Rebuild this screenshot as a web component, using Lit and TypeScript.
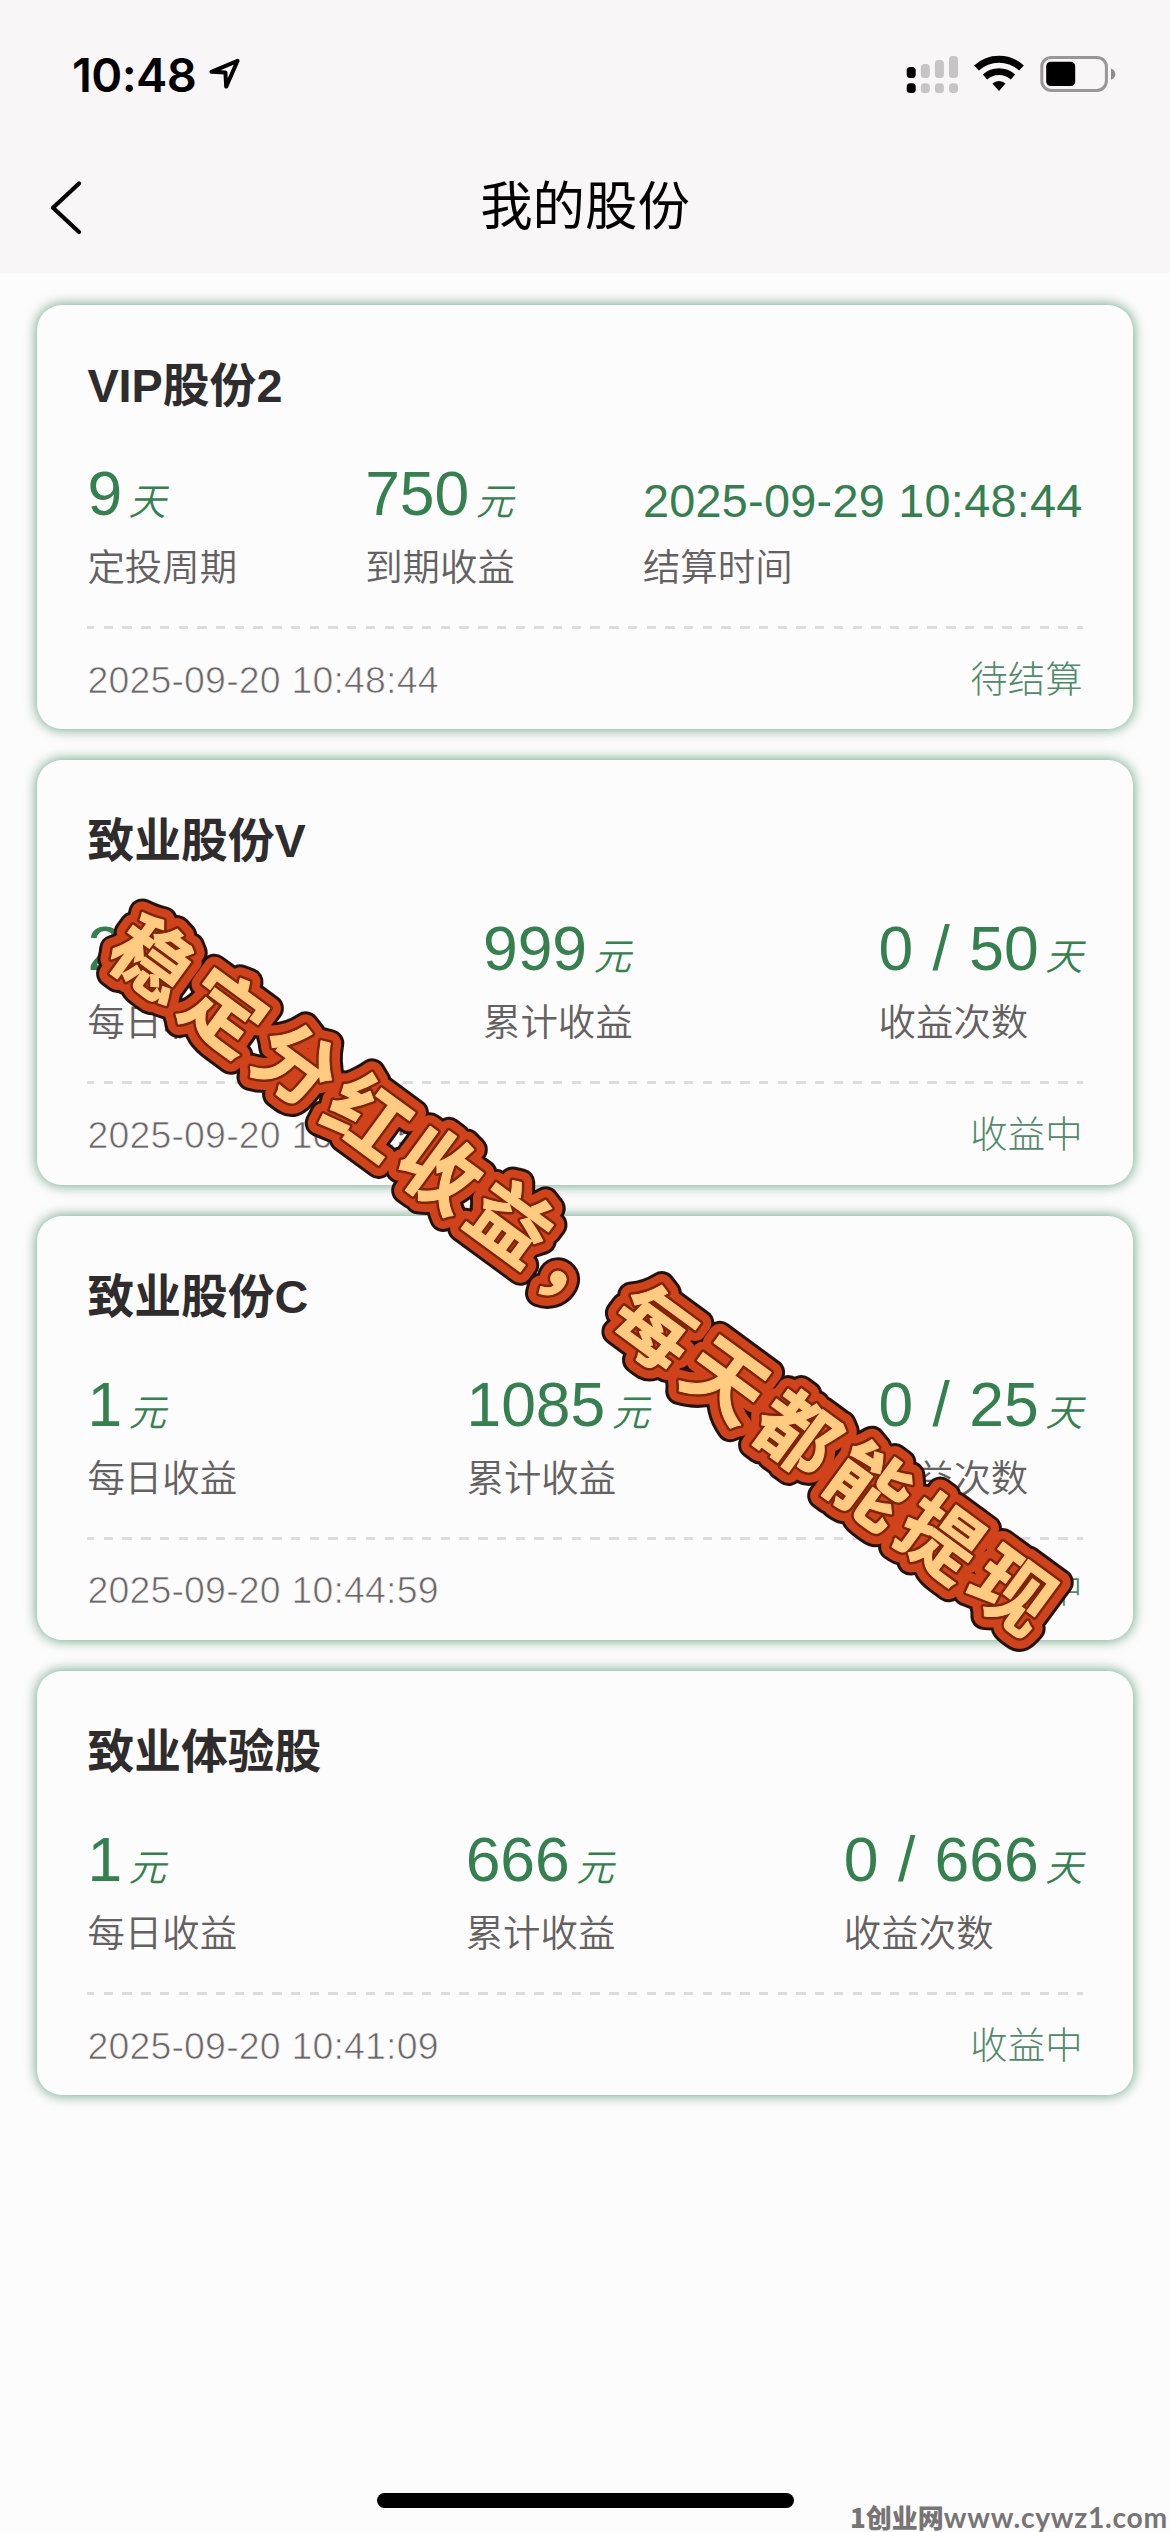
import { LitElement, html, css, svg } from "lit";
import { customElement, property } from "lit/decorators.js";
import { classMap } from "lit/directives/class-map.js";

interface Metric {
  value: string;
  unit?: string;
  label: string;
}

interface Share {
  name: string;
  metrics: Metric[];
  time: string;
  status: string;
}

const SHARES: Share[] = [
  {
    name: "VIP股份2",
    metrics: [
      { value: "9", unit: "天", label: "定投周期" },
      { value: "750", unit: "元", label: "到期收益" },
      { value: "2025-09-29 10:48:44", label: "结算时间" },
    ],
    time: "2025-09-20 10:48:44",
    status: "待结算",
  },
  {
    name: "致业股份V",
    metrics: [
      { value: "20", unit: "元", label: "每日收益" },
      { value: "999", unit: "元", label: "累计收益" },
      { value: "0 / 50", unit: "天", label: "收益次数" },
    ],
    time: "2025-09-20 10:46:52",
    status: "收益中",
  },
  {
    name: "致业股份C",
    metrics: [
      { value: "1", unit: "元", label: "每日收益" },
      { value: "1085", unit: "元", label: "累计收益" },
      { value: "0 / 25", unit: "天", label: "收益次数" },
    ],
    time: "2025-09-20 10:44:59",
    status: "收益中",
  },
  {
    name: "致业体验股",
    metrics: [
      { value: "1", unit: "元", label: "每日收益" },
      { value: "666", unit: "元", label: "累计收益" },
      { value: "0 / 666", unit: "天", label: "收益次数" },
    ],
    time: "2025-09-20 10:41:09",
    status: "收益中",
  },
];

@customElement("status-bar")
export class StatusBar extends LitElement {
  static styles = css`
    :host {
      display: flex;
      justify-content: space-between;
      height: 94px;
      padding: 52px 54px 0 72px;
      box-sizing: border-box;
    }
    .left {
      display: flex;
      gap: 11px;
    }
    .clock {
      font: 600 47px/46px Inter, "Liberation Sans", sans-serif;
      letter-spacing: -0.6px;
      color: #000;
    }
    .right {
      display: flex;
    }
    svg {
      display: block;
      flex: none;
    }
  `;

  render() {
    return html`
      <div class="left">
        <span class="clock">10:48</span>
        <svg width="34" height="42" viewBox="207 52 34 42">
          <path d="M237.6 60.8 L211.4 71.8 L225.4 72.4 L226.2 86.6 Z"
            fill="none" stroke="#000" stroke-width="4" stroke-linejoin="round" />
        </svg>
      </div>
      <div class="right">
        <svg width="216" height="42" viewBox="900 52 216 42">
          ${[67, 64, 60, 56].map((top, i) => {
            const fill = i === 0 ? "#000" : "#c7c4c5";
            const x = 906.7 + i * 14.1;
            return svg`
              <rect x=${x} y=${top} width="9" height=${78 - top} rx="3.5" fill=${fill} />
              <rect x=${x} y="83.2" width="9" height="9.8" rx="3.5" fill=${fill} />`;
          })}
          <path d="M976.5 68 A33 33 0 0 1 1021.5 68" fill="none" stroke="#000" stroke-width="7" />
          <path d="M985 77 A21 21 0 0 1 1013 77" fill="none" stroke="#000" stroke-width="6.6" />
          <path d="M992.4 83.6 A9.6 9.6 0 0 1 1005.6 83.6 L999 91 Z" fill="#000" />
          <rect x="1041.8" y="57.4" width="64.6" height="33" rx="9.5" fill="none" stroke="#9b9798" stroke-width="3" />
          <rect x="1046.2" y="61.8" width="29" height="24.2" rx="4.5" fill="#000" />
          <path d="M1111 68.4 Q1115.4 70.4 1115.4 74 Q1115.4 77.8 1111 79.8 Z" fill="#8e8b8c" />
        </svg>
      </div>
    `;
  }
}

@customElement("share-card")
export class ShareCard extends LitElement {
  @property({ attribute: false }) share!: Share;

  static styles = css`
    :host {
      display: flex;
      flex-direction: column;
      box-sizing: border-box;
      height: 424.2px;
      padding: 50px 50px 20px;
      border-radius: 25px;
      background: #fdfcfc;
      box-shadow: 0 0 13px rgba(50, 130, 88, 0.8);
    }
    .name {
      flex: none;
      height: 62px;
      font-size: 46.8px;
      line-height: 63px;
      font-weight: 700;
      color: #2e2c2d;
    }
    .metrics {
      flex: none;
      display: flex;
      justify-content: space-between;
      margin-top: 34px;
    }
    .value {
      height: 90px;
      line-height: 85px;
      font-size: 62.4px;
      color: #34804f;
      white-space: nowrap;
      word-spacing: 2px;
    }
    .value.date {
      font-size: 46.8px;
      line-height: 101px;
      letter-spacing: 0.27px;
      word-spacing: 0;
    }
    .unit {
      margin-left: 6.5px;
      font-size: 37.44px;
      font-style: italic;
      font-weight: 350;
    }
    .label {
      height: 54px;
      line-height: 54px;
      font-size: 37.44px;
      font-weight: 350;
      color: #646162;
    }
    .rule {
      flex: none;
      height: 3px;
      margin-top: 31px;
      background: repeating-linear-gradient(90deg, #dedbdc 0 9.4px, transparent 9.4px 18.72px);
      background-position-x: -2px;
    }
    .foot {
      flex: none;
      display: flex;
      justify-content: space-between;
      margin-top: 25.5px;
      font-size: 37.44px;
      line-height: 50px;
      font-weight: 300;
    }
    .time {
      color: #6a6768;
      letter-spacing: 0.2px;
      -webkit-text-stroke: 0.7px #fdfcfc;
    }
    .status {
      color: #4f8a69;
    }
  `;

  render() {
    const { name, metrics, time, status } = this.share;
    return html`
      <div class="name">${name}</div>
      <div class="metrics">
        ${metrics.map(
          (m) => html`
            <div class="metric">
              <div class=${classMap({ value: true, date: !m.unit })}>${m.value}${m.unit ? html`<span class="unit">${m.unit}</span>` : ""}</div>
              <div class="label">${m.label}</div>
            </div>
          `,
        )}
      </div>
      <div class="rule"></div>
      <div class="foot">
        <span class="time">${time}</span>
        <span class="status">${status}</span>
      </div>
    `;
  }
}

@customElement("slogan-banner")
export class SloganBanner extends LitElement {
  static styles = css`
    :host {
      position: absolute;
      left: 0;
      top: 0;
      width: 1170px;
      height: 2532px;
      pointer-events: none;
    }
    text {
      font-family: "Noto Sans CJK SC", sans-serif;
      font-weight: 700;
      font-size: 80px;
      letter-spacing: 8.9px;
      stroke-linejoin: round;
    }
    .edge { fill: #201410; stroke: #201410; stroke-width: 28px; }
    .band { fill: #cf421a; stroke: #cf421a; stroke-width: 22px; }
    .line { fill: #7e2408; stroke: #7e2408; stroke-width: 6px; }
    .face { fill: #ffcb80; stroke: #ffcb80; stroke-width: 1px; }
  `;

  render() {
    return html`
      <svg width="1170" height="2532" viewBox="0 0 1170 2532">
        <g transform="translate(153 959) rotate(36.3)">
          ${["edge", "band", "line", "face"].map(
            (layer) => svg`<text class=${layer} x="-40" y="30" aria-hidden=${layer === "face" ? "false" : "true"}>稳定分红收益，每天都能提现</text>`,
          )}
        </g>
      </svg>
    `;
  }
}

@customElement("app-root")
export class AppRoot extends LitElement {
  static styles = css`
    :host {
      position: relative;
      display: flex;
      flex-direction: column;
      width: 1170px;
      height: 2532px;
      overflow: hidden;
      background: #fdfcfc;
      font-family: "Liberation Sans", "Noto Sans CJK SC", sans-serif;
    }
    .top {
      height: 273px;
      background: #f9f6f7;
    }
    .nav {
      display: grid;
      grid-template-columns: 120px 1fr 120px;
      align-items: center;
      height: 179px;
    }
    .back {
      display: block;
      margin: 48px 0 0 48px;
    }
    .title {
      margin: 46px 0 0;
      text-align: center;
      font-size: 52.4px;
      line-height: 76px;
      font-weight: 400;
      color: #000;
    }
    .list {
      display: flex;
      flex-direction: column;
      gap: 31.2px;
      padding: 32px 37.4px 0;
    }
    .home {
      position: absolute;
      left: 377px;
      top: 2493px;
      width: 417px;
      height: 15px;
      border-radius: 8px;
      background: #000;
    }
    .mark {
      position: absolute;
      left: 850px;
      top: 2503px;
      height: 28px;
      line-height: 28px;
      white-space: nowrap;
      color: #777475;
      font-size: 26px;
      font-weight: 900;
      font-family: "Noto Sans CJK SC", sans-serif;
    }
    .site {
      font-family: Lato, "Liberation Sans", sans-serif;
      font-weight: 700;
      font-size: 28.3px;
      letter-spacing: 0.7px;
    }
  `;

  render() {
    return html`
      <header class="top">
        <status-bar></status-bar>
        <div class="nav">
          <svg class="back" width="36" height="56" viewBox="48 180 36 56">
            <path d="M79 183.5 L53 207.8 L79 232" fill="none" stroke="#000" stroke-width="4.2"
              stroke-linecap="round" stroke-linejoin="round" />
          </svg>
          <h1 class="title">我的股份</h1>
        </div>
      </header>
      <main class="list">
        ${SHARES.map((share) => html`<share-card .share=${share}></share-card>`)}
      </main>
      <slogan-banner></slogan-banner>
      <div class="home"></div>
      <div class="mark">1创业网<span class="site">www.cywz1.com</span></div>
    `;
  }
}
